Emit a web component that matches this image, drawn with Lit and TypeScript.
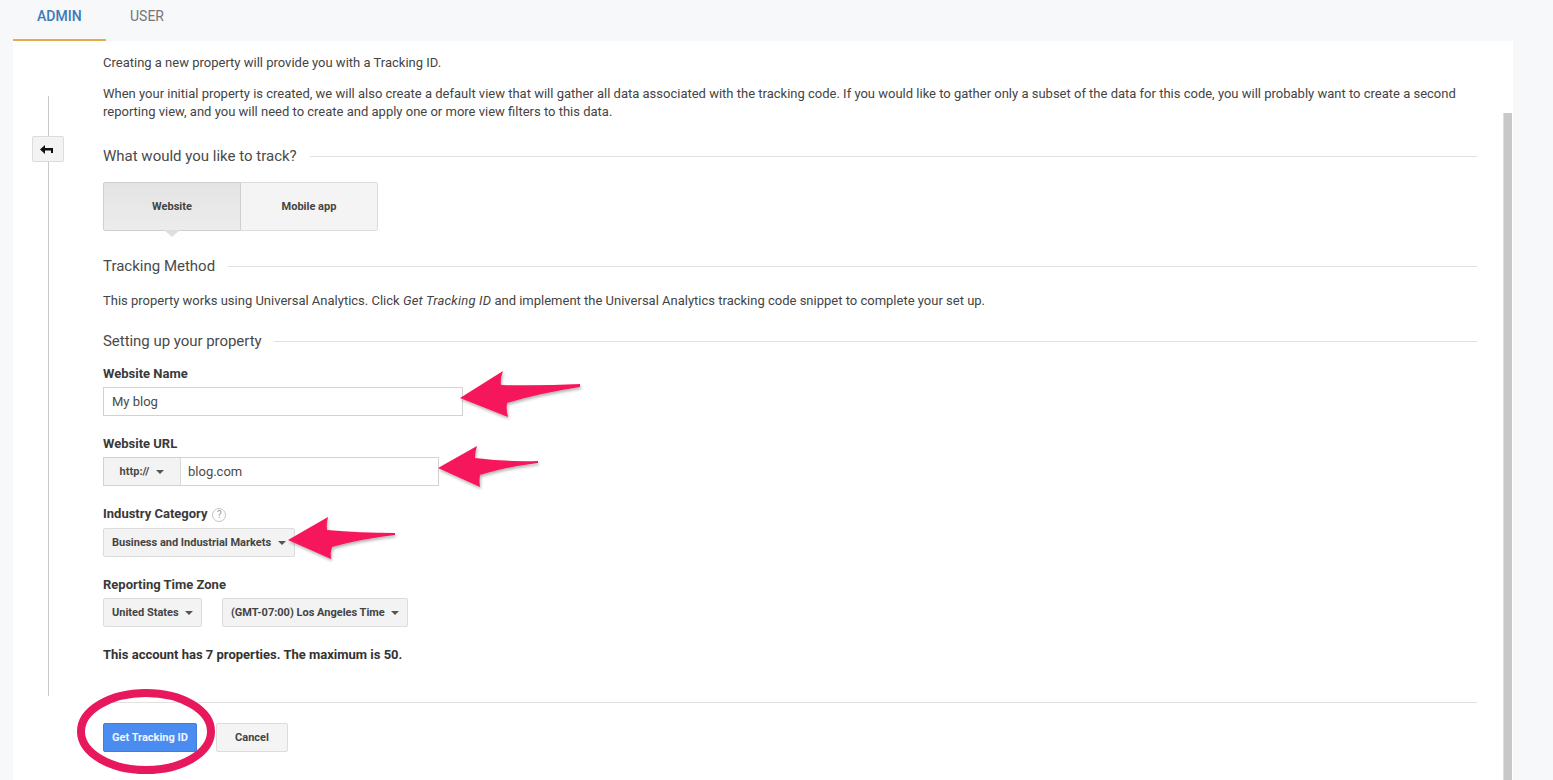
import { LitElement, html, css } from "lit";
import { customElement } from "lit/decorators.js";

@customElement("app-root")
export class AppRoot extends LitElement {
  static styles = css`
    :host { display: block; position: relative; width: 1553px; height: 780px; overflow: hidden; background: #f7f8fa; font-family: Roboto, "Liberation Sans", sans-serif; font-size: 13px; line-height: 18px; color: #444; }
    .tabs { display: flex; height: 41px; margin-left: 13px; font-size: 14px; }
    .tab { box-sizing: border-box; height: 41px; padding: 7px 24px 0; color: #757575; }
    .tab.on { color: #3f78b8; border-bottom: 2px solid #e0ae4f; width: 93px; font-weight: 500; }
    .card { display: flex; margin-left: 13px; width: 1500px; height: 739px; background: #fff; }
    .rail { flex: none; display: flex; flex-direction: column; align-items: center; width: 32px; height: 600px; margin: 55px 39px 0 19px; }
    .rail i { display: block; width: 1px; background: #c8c8c8; }
    .rail i.a { height: 40px; }
    .rail i.b { flex: 1; }
    .back { box-sizing: border-box; display: flex; align-items: center; justify-content: center; width: 32px; height: 26px; padding-right: 3px; background: #f3f3f3; border: 1px solid #dcdcdc; border-radius: 2px; }
    .main { flex: none; box-sizing: border-box; width: 1374px; padding-top: 13px; }
    p { margin: 0; }
    .p2 { margin-top: 13px; width: 1370px; }
    .heading { display: flex; align-items: center; gap: 13px; height: 20px; font-size: 15px; line-height: 20px; color: #4a4a4a; }
    .heading::after { content: ""; flex: 1; height: 1px; background: #e0e0e0; }
    .h1 { margin-top: 25px; }
    .h2 { margin-top: 25px; }
    .h3 { margin-top: 21px; gap: 12px; letter-spacing: -0.04px; }
    .toggle { display: flex; width: 275px; height: 49px; margin-top: 16px; font-size: 11px; font-weight: 700; }
    .toggle div { box-sizing: border-box; display: flex; align-items: center; justify-content: center; flex: 1; background: #f4f4f4; border: 1px solid #dcdcdc; border-left: 0; border-radius: 0 2px 2px 0; }
    .toggle .sel { position: relative; background: linear-gradient(#e4e4e4, #ececec); border: 1px solid #cfcfcf; border-radius: 2px 0 0 2px; }
    .toggle .sel::after { content: ""; position: absolute; left: 60px; bottom: -7px; border: 8px solid transparent; border-bottom: 0; border-top: 7px solid #dedede; }
    .p3 { margin-top: 16px; }
    em { letter-spacing: 0.2px; }
    label { display: block; height: 18px; font-weight: 700; margin-top: 19px; color: #3a3a3a; }
    .first { margin-top: 14px; }
    .input { box-sizing: border-box; display: flex; align-items: center; height: 29px; margin-top: 4px; padding-left: 8px; background: #fff; border: 1px solid #d2d2d2; color: #4a4a4a; }
    .name { width: 360px; }
    .url { width: 336px; padding-left: 0; }
    .proto { box-sizing: border-box; display: flex; align-items: center; justify-content: center; gap: 7px; width: 77px; height: 27px; margin-right: 7px; background: #f3f3f3; border-right: 1px solid #d8d8d8; font-size: 11px; font-weight: 700; }
    .caret { display: inline-block; border: 4px solid transparent; border-bottom: 0; border-top: 4px solid #555; }
    .help { display: inline-flex; align-items: center; justify-content: center; box-sizing: border-box; width: 14px; height: 14px; margin-left: 5px; border: 1px solid #c4c4c4; border-radius: 50%; font-size: 10px; font-weight: 400; line-height: 1; color: #999; vertical-align: 0; }
    .select { box-sizing: border-box; display: flex; align-items: center; justify-content: space-between; height: 29px; padding: 0 8px; background: #f3f3f3; border: 1px solid #dcdcdc; border-radius: 2px; font-size: 11px; font-weight: 700; }
    .sel-row { display: flex; gap: 20px; margin-top: 4px; }
    .s1 { width: 192px; margin-top: 5px; }
    .s2 { width: 99px; }
    .s3 { width: 186px; }
    .note { margin-top: 19px; font-weight: 700; color: #333; }
    .foot { margin-top: 38px; padding-top: 20px; border-top: 1px solid #e0e0e0; display: flex; gap: 19px; }
    .btn { box-sizing: border-box; display: flex; align-items: center; justify-content: center; height: 29px; border-radius: 2px; font-size: 11px; font-weight: 700; }
    .primary { width: 94px; background: #4a8cf0; border: 1px solid #3d7fe0; color: #f0f5ff; }
    .cancel { width: 72px; background: #f4f4f4; border: 1px solid #dcdcdc; }
    .scroll { flex: none; width: 9px; height: 667px; margin: 72px 0 0 26px; background: #c8c8c8; border-left: 1px solid #dedede; box-sizing: border-box; }
    .marks { position: absolute; left: 0; top: 0; width: 1553px; height: 780px; pointer-events: none; }
  `;

  render() {
    return html`
      <div class="tabs"><div class="tab on">ADMIN</div><div class="tab">USER</div></div>
      <div class="card">
        <div class="rail">
          <i class="a"></i>
          <div class="back">
            <svg width="13" height="9" viewBox="0 0 13 9"><path d="M0 4.500 5 0V3H13V8H11V5.500H5V9Z" fill="#111"/></svg>
          </div>
          <i class="b"></i>
        </div>
        <div class="main">
          <p>Creating a new property will provide you with a Tracking ID.</p>
          <p class="p2">When your initial property is created, we will also create a default view that will gather all data associated with the tracking code. If you would like to gather only a subset of the data for this code, you will probably want to create a second reporting view, and you will need to create and apply one or more view filters to this data.</p>
          <div class="heading h1">What would you like to track?</div>
          <div class="toggle"><div class="sel">Website</div><div>Mobile app</div></div>
          <div class="heading h2">Tracking Method</div>
          <p class="p3">This property works using Universal Analytics. Click <em>Get Tracking ID</em> and implement the Universal Analytics tracking code snippet to complete your set up.</p>
          <div class="heading h3">Setting up your property</div>
          <label class="first">Website Name</label>
          <div class="input name">My blog</div>
          <label>Website URL</label>
          <div class="input url"><div class="proto">http:// <span class="caret"></span></div>blog.com</div>
          <label>Industry Category<span class="help">?</span></label>
          <div class="select s1">Business and Industrial Markets <span class="caret"></span></div>
          <label>Reporting Time Zone</label>
          <div class="sel-row">
            <div class="select s2">United States <span class="caret"></span></div>
            <div class="select s3">(GMT-07:00) Los Angeles Time <span class="caret"></span></div>
          </div>
          <p class="note">This account has 7 properties. The maximum is 50.</p>
          <div class="foot">
            <div class="btn primary">Get Tracking ID</div>
            <div class="btn cancel">Cancel</div>
          </div>
        </div>
        <div class="scroll"></div>
      </div>
      <svg class="marks" viewBox="0 0 1553 780">
        <defs><filter id="s" x="-20%" y="-30%" width="140%" height="170%"><feDropShadow dx="1" dy="2" stdDeviation="1.5" flood-color="#000" flood-opacity=".3"/></filter></defs>
        <g fill="#f6175c" filter="url(#s)">
          <path d="M460 398 503 371Q500 379 501 385Q540 386 580 384L580 387Q540 393 507 403Q506 410 508 417Z"/>
          <path d="M438 468 477 446Q475 452 475 458Q505 462 538 461L538 463Q505 467 480 475Q479 481 480 487Z"/>
          <path d="M288 540 328 517Q326 524 327 530Q360 533 395 533L395 535Q360 539 332 547Q330 553 331 559Z"/>
        </g>
        <ellipse cx="146" cy="731.500" rx="65" ry="38.500" fill="none" stroke="#e8185d" stroke-width="8"/>
      </svg>
    `;
  }
}
